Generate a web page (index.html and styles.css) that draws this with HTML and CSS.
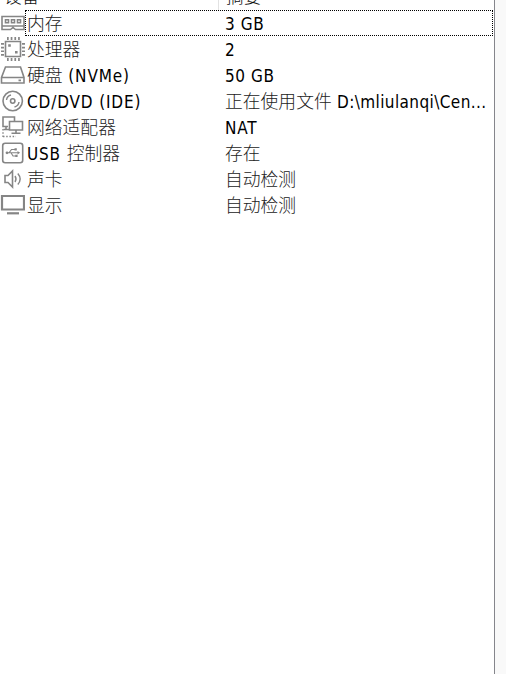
FILE: index.html
```
<!DOCTYPE html>
<html lang="zh-CN">
<head>
<meta charset="utf-8">
<title>设备</title>
<link rel="stylesheet" href="styles.css">
</head>
<body>
<main class="panel">
<header class="header"><span class="head-name">设备</span><span class="head-summary">摘要</span></header>
<div class="row">
<svg class="icon" viewBox="0 0 25 26"><path d="M2 6.5H24V16H2zM2 16V19.5H10.5L13 17.5L15.5 19.5H24V16"/><path d="M5.5 9.7h3v3h-3zM11.5 9.7h3v3h-3zM17.5 9.7h3v3h-3z"/></svg>
<div class="cells focused"><span class="name zh">内存</span><span class="value">3 GB</span></div>
</div>
<div class="row">
<svg class="icon" viewBox="0 0 25 26"><path d="M5.5 5.5H20.5V20.5H5.5z"/><path class="pins" d="M7 2.5H20M7 23.5H20M2.5 7V20M23.5 7V20"/><path class="fill" d="M8.2 8.2h2.6v2.6H8.2zM15 15h2.6v2.6h-2.6z"/></svg>
<div class="cells"><span class="name zh">处理器</span><span class="value">2</span></div>
</div>
<div class="row">
<svg class="icon" viewBox="0 0 25 26"><path d="M5.5 5H20.5L24 15.5V21H1.5V15.5zM1.5 15.5H24M18.5 18.4H21"/></svg>
<div class="cells"><span class="name caps mixed"><span class="zh">硬盘</span> (NVMe)</span><span class="value">50 GB</span></div>
</div>
<div class="row">
<svg class="icon" viewBox="0 0 25 26"><circle cx="12.7" cy="13" r="9.7"/><circle cx="12.7" cy="13" r="2.2"/><path class="thin" d="M6.5 12Q7 8 11 7M19 14Q18.5 18 14.5 19"/></svg>
<div class="cells"><span class="name caps">CD/DVD (IDE)</span><span class="value path mixed"><span class="zh">正在使用文件</span> D:\mliulanqi\Cen...</span></div>
</div>
<div class="row">
<svg class="icon" viewBox="0 0 25 26"><path d="M8 12.5H3V3H14.5V7M6 12.5V15.5M3.5 15.5H9M9.5 7.5H22.5V16H9.5zM16 16V19M11.5 19.2H20.5"/><path class="dots" d="M3 15V23M3 22.5H16"/></svg>
<div class="cells"><span class="name zh">网络适配器</span><span class="value caps">NAT</span></div>
</div>
<div class="row">
<svg class="icon" viewBox="0 0 25 26"><rect x="2.7" y="3.2" width="20" height="19.5" rx="2.5"/><path class="usb" d="M7 12.8H18M9 12.8L11.5 9.5H15M11 12.8L13 16H16"/><circle class="fill" cx="7" cy="12.8" r="1.4"/><path class="fill" d="M14.5 8.3h2.3v2.3h-2.3zM15.3 14.8h2.3v2.3h-2.3zM17.5 11l2.6 1.8-2.6 1.8z"/></svg>
<div class="cells"><span class="name caps mixed">USB <span class="zh">控制器</span></span><span class="value zh">存在</span></div>
</div>
<div class="row">
<svg class="icon" viewBox="0 0 25 26"><path d="M5 9.5H8L12.5 5V21L8 16.5H5z"/><path class="thin" d="M15 10Q17 13 15 16M17.8 7.5Q22.5 13 17.8 18.5"/></svg>
<div class="cells"><span class="name zh">声卡</span><span class="value zh">自动检测</span></div>
</div>
<div class="row">
<svg class="icon" viewBox="0 0 25 26"><path class="screen" d="M2 4H24V17.5H2z"/><path class="screen" d="M7 21.3H19"/></svg>
<div class="cells"><span class="name zh">显示</span><span class="value zh">自动检测</span></div>
</div>
</main>
</body>
</html>
```
FILE: styles.css
```
body {
  margin: 0;
  height: 674px;
  overflow: hidden;
  background: #f9f9f9;
  color: #000;
  font: 17px/26px "DejaVu Sans Condensed", "DejaVu Sans", "Noto Sans CJK SC", sans-serif;
  font-stretch: condensed;
  letter-spacing: 0.6px;
}
.panel {
  box-sizing: border-box;
  width: 495px;
  height: 674px;
  overflow: hidden;
  background: #fff;
  border-right: 1px solid #85868c;
}
.header {
  display: flex;
  height: 10px;
  overflow: hidden;
  align-items: flex-end;
  font: 300 17.7px/22px "Noto Sans CJK SC", sans-serif;
  letter-spacing: 0;
  color: #111;
}
.head-name, .head-summary {
  box-sizing: border-box;
  display: flex;
  height: 10px;
  padding-bottom: 4px;
  align-items: flex-end;
}
.head-name {
  width: 219px;
  padding-left: 4px;
  border-right: 1px solid #e2e2e2;
}
.head-summary { padding-left: 7px; }
.row { display: flex; height: 26px; }
.icon {
  flex: none;
  width: 25px;
  height: 26px;
  fill: none;
  stroke: #858585;
  stroke-width: 1.6;
}
.icon .thin { stroke-width: 1.4; }
.icon .usb { stroke-width: 1.1; }
.icon .screen { stroke-width: 2.2; }
.icon .pins { stroke-width: 3; stroke-dasharray: 1.7 2; }
.icon .dots { stroke-width: 1.4; stroke-dasharray: 1.5 1.7; }
.icon .fill { fill: #858585; stroke: none; }
.cells {
  box-sizing: border-box;
  display: grid;
  grid-template-columns: 198px 1fr;
  width: 468px;
  padding-left: 2px;
  line-height: 28px;
  white-space: nowrap;
}
.focused {
  padding-left: 1px;
  line-height: 26px;
  border: 1px dotted #000;
}
.caps { letter-spacing: 0.85px; }
.path { letter-spacing: 0.4px; }
.zh {
  font-family: "Noto Sans CJK SC", sans-serif;
  font-weight: 300;
  font-size: 17.8px;
  letter-spacing: 0;
  color: #222;
}
.name.zh, .value.zh, .mixed { line-height: 25px; }
.focused .name.zh { line-height: 23px; }
```
